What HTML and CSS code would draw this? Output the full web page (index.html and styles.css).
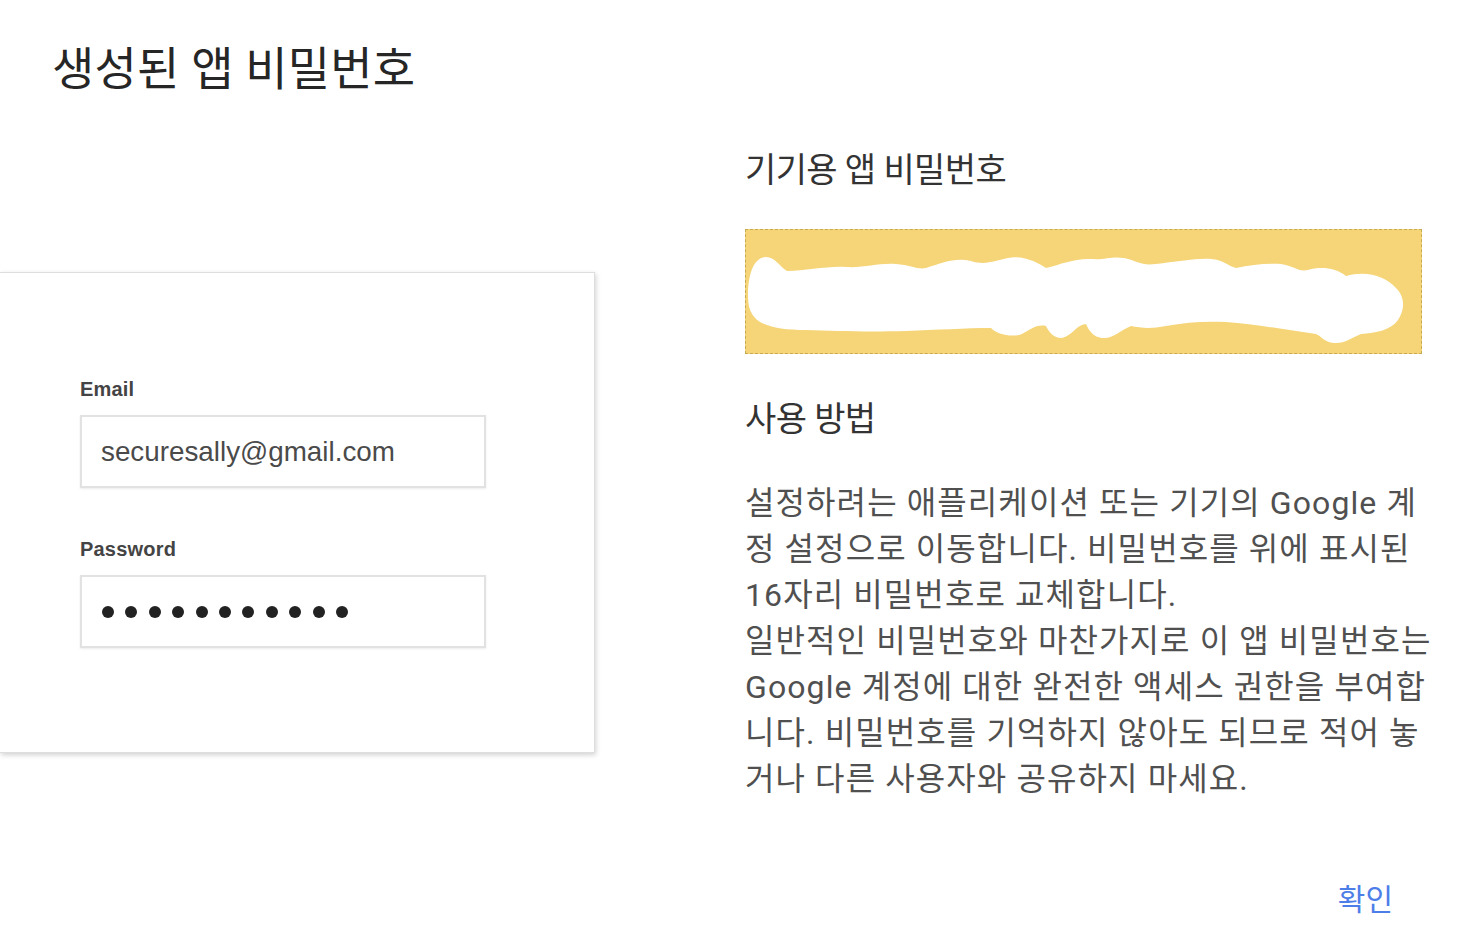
FILE: index.html
```html
<!DOCTYPE html>
<html lang="ko">
<head>
<meta charset="utf-8">
<title>생성된 앱 비밀번호</title>
<link rel="stylesheet" href="styles.css">
</head>
<body>
<div class="dialog">
  <h1 class="title">생성된 앱 비밀번호</h1>
  <div class="content">
    <div class="left">
      <div class="card">
        <div class="field-label">Email</div>
        <div class="input">securesally@gmail.com</div>
        <div class="field-label field-label-pw">Password</div>
        <div class="input input-pw">
          <span class="dot"></span><span class="dot"></span><span class="dot"></span><span class="dot"></span><span class="dot"></span><span class="dot"></span><span class="dot"></span><span class="dot"></span><span class="dot"></span><span class="dot"></span><span class="dot"></span>
        </div>
      </div>
    </div>
    <div class="right">
      <h2 class="subhead">기기용 앱 비밀번호</h2>
      <div class="pw-box">
        <svg class="scribble" width="674" height="122" viewBox="0 0 674 122">
          <path fill="#ffffff" d="M2 66 C2 44 8 27 20 27 C29 27 33 36 41 41 C60 41 80 36 100 37 C120 38 130 33 150 34 C165 35 172 40 180 38 C195 33 210 27 225 31 C240 36 250 30 262 28 C278 25 292 33 300 38 C315 34 330 28 345 29 C360 30 365 26 378 28 C392 31 395 36 410 34 C430 32 450 28 465 29 C478 30 482 36 490 38 C505 35 520 33 535 34 C548 36 552 42 562 40 C575 36 590 38 600 46 C620 40 640 46 650 58 C658 66 660 78 652 90 C645 100 630 103 615 104 C605 108 598 114 588 113 C578 112 575 106 570 104 C540 100 510 94 480 92 C460 91 440 92 420 96 C405 99 395 98 385 96 C375 100 368 108 358 108 C346 108 342 98 340 94 C330 95 326 106 316 108 C306 108 302 100 300 96 C290 94 284 100 276 104 C266 108 250 104 245 98 C220 98 190 100 160 101 C120 102 90 101 60 100 C40 100 25 98 14 92 C5 86 2 78 2 66 Z"/>
        </svg>
      </div>
      <h2 class="subhead subhead-usage">사용 방법</h2>
      <p class="body-text">설정하려는 애플리케이션 또는 기기의 Google 계<br>정 설정으로 이동합니다. 비밀번호를 위에 표시된<br>16자리 비밀번호로 교체합니다.</p>
      <p class="body-text">일반적인 비밀번호와 마찬가지로 이 앱 비밀번호는<br>Google 계정에 대한 완전한 액세스 권한을 부여합<br>니다. 비밀번호를 기억하지 않아도 되므로 적어 놓<br>거나 다른 사용자와 공유하지 마세요.</p>
    </div>
  </div>
  <div class="actions">
    <span class="ok-button">확인</span>
  </div>
</div>
</body>
</html>
```

FILE: styles.css
```css
html, body {
  margin: 0;
  padding: 0;
  background: #ffffff;
}

body {
  font-family: Roboto, "Noto Sans CJK KR", sans-serif;
  overflow: hidden;
  width: 1466px;
  height: 952px;
}

.dialog {
  display: flex;
  flex-direction: column;
}

.title {
  margin: 0;
  padding: 39px 0 0 52px;
  font-size: 46px;
  line-height: 60px;
  font-weight: 400;
  color: #262626;
  letter-spacing: 0.2px;
}

.content {
  display: flex;
  align-items: flex-start;
}

.left {
  width: 595px;
  flex: none;
}

.card {
  margin-top: 173px;
  box-sizing: border-box;
  width: 595px;
  height: 481px;
  border: 1px solid #dedede;
  border-left: none;
  box-shadow: 1px 2px 5px rgba(0, 0, 0, 0.18);
  padding: 104px 0 0 80px;
  font-family: "Liberation Sans", Arial, sans-serif;
}

.field-label {
  font-size: 20px;
  line-height: 24px;
  font-weight: 700;
  color: #444444;
  letter-spacing: 0.2px;
}

.field-label-pw {
  margin-top: 49px;
}

.input {
  margin-top: 14px;
  box-sizing: border-box;
  width: 406px;
  height: 73px;
  border: 2px solid #e2e2e2;
  box-shadow: 0 1px 2px rgba(0, 0, 0, 0.08);
  display: flex;
  align-items: center;
  padding-left: 19px;
  font-size: 27.8px;
  color: #4a4a4a;
}

.input-pw {
  gap: 11.4px;
  padding-left: 20px;
}

.dot {
  width: 12px;
  height: 12px;
  border-radius: 50%;
  background: #222222;
  flex: none;
}

.right {
  margin-left: 150px;
  width: 720px;
  padding-top: 49px;
}

.subhead {
  margin: 0;
  font-size: 34px;
  line-height: 44px;
  font-weight: 400;
  color: #333333;
  letter-spacing: -0.6px;
}

.pw-box {
  margin-top: 37px;
  box-sizing: border-box;
  width: 677px;
  height: 125px;
  background: #f5d577;
  border: 1px dashed #c7ab52;
  line-height: 0;
}

.scribble {
  display: block;
}

.subhead-usage {
  margin-top: 43px;
}

.body-text {
  margin: 0;
  font-size: 32px;
  line-height: 46px;
  color: #505050;
  letter-spacing: 1.1px;
  white-space: nowrap;
}

.subhead-usage + .body-text {
  margin-top: 39px;
}

.actions {
  display: flex;
  justify-content: flex-end;
  padding-right: 73px;
  margin-top: 78px;
}

.ok-button {
  font-size: 30px;
  line-height: 40px;
  color: #4d7ee8;
  cursor: pointer;
}
```
